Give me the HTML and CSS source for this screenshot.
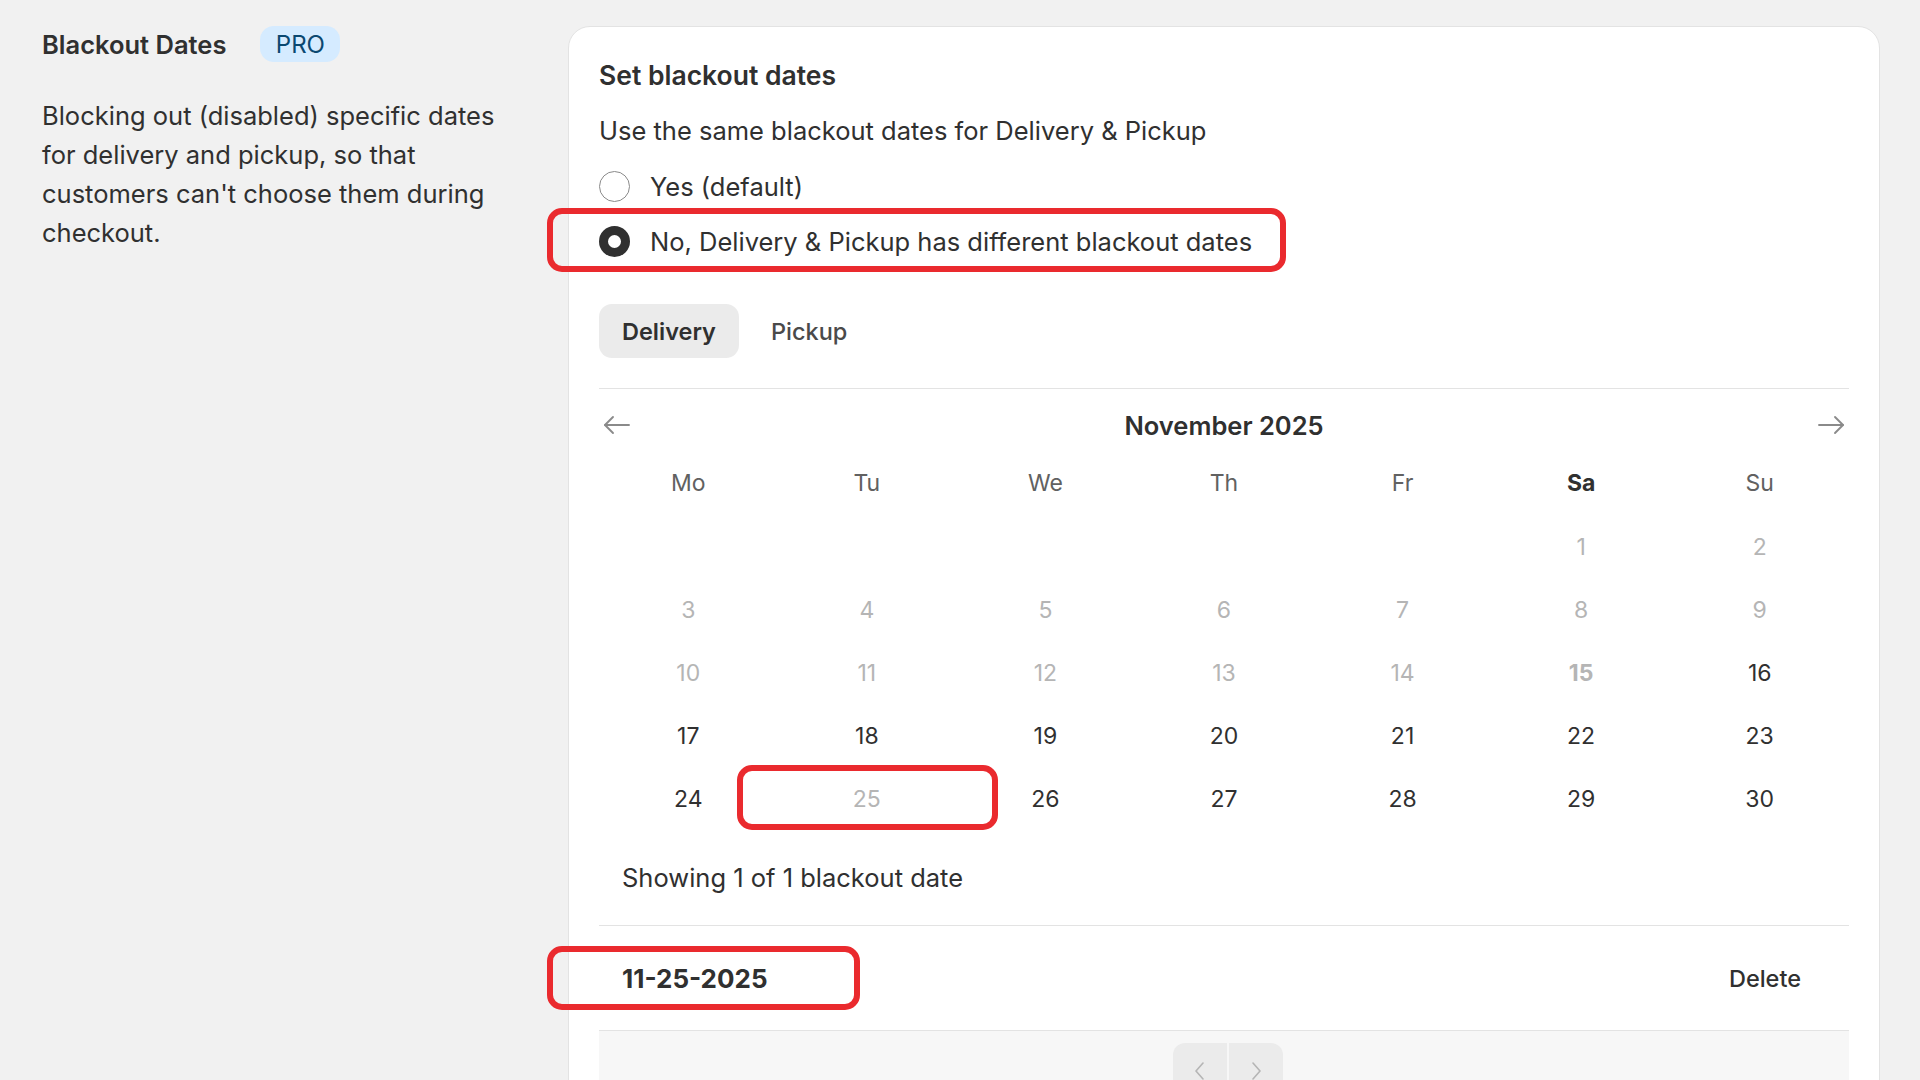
FILE: index.html
```html
<!DOCTYPE html>
<html lang="en">
<head>
  <meta charset="UTF-8">
  <title>Blackout Dates</title>
  <link rel="stylesheet" href="styles.css">
</head>
<body>
  <div class="page">
    <aside class="intro">
      <div class="intro-head">
        <h2>Blackout Dates</h2>
        <span class="badge">PRO</span>
      </div>
      <p>Blocking out (disabled) specific dates for delivery and pickup, so that customers can't choose them during checkout.</p>
    </aside>

    <section class="card">
      <h3 class="card-title">Set blackout dates</h3>
      <p class="card-sub">Use the same blackout dates for Delivery &amp; Pickup</p>

      <div class="radios">
        <label class="radio">
          <span class="dot"></span>
          Yes (default)
        </label>
        <label class="radio checked">
          <span class="dot"></span>
          No, Delivery &amp; Pickup has different blackout dates
          <span class="mark mark-radio"></span>
        </label>
      </div>

      <div class="tabs">
        <button class="tab active">Delivery</button>
        <button class="tab">Pickup</button>
      </div>

      <div class="calendar">
        <div class="cal-head">
          <button class="nav-btn">
            <svg width="32" height="32" viewBox="0 0 24 24" fill="none" stroke="#8a8a8a" stroke-width="1.4" stroke-linecap="round" stroke-linejoin="round"><path d="M21 12H3"/><path d="M9 6l-6 6 6 6"/></svg>
          </button>
          <div class="month">November 2025</div>
          <button class="nav-btn">
            <svg width="32" height="32" viewBox="0 0 24 24" fill="none" stroke="#8a8a8a" stroke-width="1.4" stroke-linecap="round" stroke-linejoin="round"><path d="M3 12h18"/><path d="M15 6l6 6-6 6"/></svg>
          </button>
        </div>

        <div class="weekdays">
          <span>Mo</span><span>Tu</span><span>We</span><span>Th</span><span>Fr</span><span class="strong">Sa</span><span>Su</span>
        </div>

        <div class="days">
          <span></span><span></span><span></span><span></span><span></span>
          <span class="off">1</span><span class="off">2</span>
          <span class="off">3</span><span class="off">4</span><span class="off">5</span><span class="off">6</span><span class="off">7</span><span class="off">8</span><span class="off">9</span>
          <span class="off">10</span><span class="off">11</span><span class="off">12</span><span class="off">13</span><span class="off">14</span><span class="off today">15</span><span>16</span>
          <span>17</span><span>18</span><span>19</span><span>20</span><span>21</span><span>22</span><span>23</span>
          <span>24</span><span class="off picked">25<i class="mark mark-day"></i></span><span>26</span><span>27</span><span>28</span><span>29</span><span>30</span>
        </div>
      </div>

      <p class="count">Showing 1 of 1 blackout date</p>

      <div class="date-row">
        <span class="date">11-25-2025</span>
        <button class="link">Delete</button>
        <span class="mark mark-date"></span>
      </div>

      <div class="list-foot">
        <div class="pager">
          <button class="pg">
            <svg width="14" height="22" viewBox="0 0 14 22" fill="none" stroke="#b5b5b5" stroke-width="1.6" stroke-linecap="round" stroke-linejoin="round"><path d="M10 3L3 11l7 8"/></svg>
          </button>
          <button class="pg">
            <svg width="14" height="22" viewBox="0 0 14 22" fill="none" stroke="#b5b5b5" stroke-width="1.6" stroke-linecap="round" stroke-linejoin="round"><path d="M4 3l7 8-7 8"/></svg>
          </button>
        </div>
      </div>
    </section>
  </div>
</body>
</html>
```

FILE: styles.css
```css
/* Base */
* {
  box-sizing: border-box;
}

body {
  margin: 0;
  height: 1080px;
  overflow: hidden;
  background: #f1f1f1;
  font-family: Inter, "Noto Sans", sans-serif;
  color: #303030;
}

button {
  font-family: inherit;
  border: none;
  background: none;
  padding: 0;
  color: inherit;
}

.page {
  display: grid;
  grid-template-columns: 458px 1312px;
  column-gap: 68px;
  padding: 26px 40px 0 42px;
}

/* Left column */
.intro-head {
  display: flex;
  align-items: center;
  gap: 34px;
  height: 36px;
}

.intro-head h2 {
  margin: 0;
  font-size: 25.5px;
  font-weight: 600;
}

.badge {
  display: inline-flex;
  align-items: center;
  justify-content: center;
  width: 80px;
  height: 36px;
  border-radius: 14px;
  background: #d5ebff;
  color: #0b4870;
  font-size: 24px;
}

.intro p {
  margin: 34px 0 0;
  width: 480px;
  font-size: 25.5px;
  line-height: 39px;
}

/* Card */
.card {
  background: #fff;
  border: 1px solid #e3e3e3;
  border-radius: 22px;
  padding: 29px 30px 0;
  min-height: 1100px;
}

.card-title {
  margin: 0;
  font-size: 26.5px;
  font-weight: 600;
  line-height: 38px;
}

.card-sub {
  margin: 18px 0 0;
  font-size: 25.5px;
  line-height: 38px;
}

.radios {
  margin-top: 9px;
}

.radio {
  position: relative;
  display: flex;
  align-items: center;
  gap: 20px;
  height: 55px;
  font-size: 25.5px;
}

.dot {
  width: 31px;
  height: 31px;
  border-radius: 50%;
  border: 1.5px solid #8a8a8a;
  background: #fff;
  flex-shrink: 0;
}

.radio.checked .dot {
  border: 9px solid #303030;
}

/* Red annotation boxes */
.mark {
  position: absolute;
  border: 6px solid #ea2a2e;
  border-radius: 15px;
  pointer-events: none;
}

.mark-radio {
  left: -52px;
  top: -6px;
  width: 739px;
  height: 64px;
}

.mark-day {
  left: -41px;
  top: -2px;
  width: 261px;
  height: 65px;
}

.mark-date {
  left: -52px;
  top: 20px;
  width: 313px;
  height: 64px;
}

/* Tabs */
.tabs {
  display: flex;
  gap: 9px;
  margin-top: 35px;
  padding-bottom: 30px;
  border-bottom: 1px solid #e3e3e3;
}

.tab {
  height: 54px;
  padding: 0 23px;
  border-radius: 13px;
  font-size: 23.5px;
  font-weight: 500;
  color: #4a4a4a;
}

.tab.active {
  background: #ebebeb;
  color: #303030;
  font-weight: 600;
}

/* Calendar */
.cal-head {
  display: flex;
  align-items: center;
  justify-content: space-between;
  height: 72px;
}

.nav-btn {
  display: flex;
  width: 36px;
  height: 36px;
  align-items: center;
  justify-content: center;
}

.month {
  font-size: 25.5px;
  font-weight: 600;
}

.weekdays,
.days {
  display: grid;
  grid-template-columns: repeat(7, 1fr);
  text-align: center;
  font-size: 23px;
}

.weekdays {
  height: 44px;
  align-items: center;
  color: #616161;
}

.weekdays .strong {
  color: #303030;
  font-weight: 700;
}

.days {
  margin-top: 10px;
  grid-auto-rows: 63px;
  align-items: center;
}

.days span {
  position: relative;
  display: flex;
  align-items: center;
  justify-content: center;
  height: 63px;
}

.days .off {
  color: #b5b5b5;
}

.days .today {
  font-weight: 700;
}

/* List */
.count {
  margin: 29px 0 0;
  padding-left: 23px;
  font-size: 25.5px;
  line-height: 38px;
  padding-bottom: 28px;
  border-bottom: 1px solid #e3e3e3;
}

.date-row {
  position: relative;
  display: flex;
  align-items: center;
  justify-content: space-between;
  height: 105px;
  padding: 0 48px 0 23px;
  border-bottom: 1px solid #e3e3e3;
}

.date {
  font-size: 26px;
  font-weight: 700;
}

.link {
  font-size: 23.5px;
  font-weight: 500;
}

.list-foot {
  background: #f7f7f7;
  height: 80px;
  padding-top: 12px;
  display: flex;
  justify-content: center;
}

.pager {
  display: flex;
  gap: 2px;
  margin-left: 7px;
}

.pg {
  display: flex;
  align-items: center;
  justify-content: center;
  width: 54px;
  height: 56px;
  background: #ebebeb;
}

.pg:first-child {
  border-radius: 12px 0 0 12px;
}

.pg:last-child {
  border-radius: 0 12px 12px 0;
}
```
